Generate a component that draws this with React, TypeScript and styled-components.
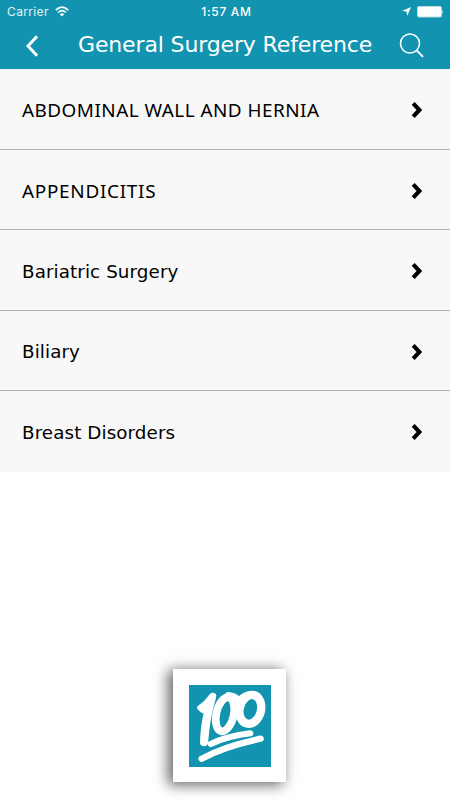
import React from "react";
import styled, { createGlobalStyle } from "styled-components";

const Global = createGlobalStyle`
  * { box-sizing: border-box; }
  body { margin: 0; background: #fff; }
`;

const Screen = styled.div`
  width: 450px;
  height: 800px;
  display: flex;
  flex-direction: column;
  overflow: hidden;
  background: #fff;
  color: #000;
  font-family: "DejaVu Sans", Verdana, sans-serif;
`;

const Header = styled.header`
  height: 69.4px;
  flex: none;
  background: #1294b0;
  color: #fff;
`;

const StatusBar = styled.div`
  height: 23px;
  display: grid;
  grid-template-columns: 1fr auto 1fr;
  align-items: center;
  padding: 0 6px 0 7px;
  font: 400 12px/23px Inter, sans-serif;
`;

const StatusGroup = styled.div<{ $end?: boolean }>`
  display: flex;
  align-items: center;
  justify-content: ${(p) => (p.$end ? "flex-end" : "flex-start")};
  gap: 6px;
`;

const Carrier = styled.span`
  letter-spacing: 0.36px;
  opacity: 0.9;
`;

const Clock = styled.span`
  font-weight: 500;
  letter-spacing: 0.7px;
  padding-left: 2px;
`;

const NavBar = styled.div`
  height: 45px;
  display: grid;
  grid-template-columns: 78px minmax(0, 1fr) 78px;
  align-items: center;
`;

const IconButton = styled.button<{ $inset: number }>`
  border: 0;
  background: none;
  color: inherit;
  padding: 0 0 0 ${(p) => p.$inset}px;
  display: flex;
`;

const Title = styled.h1`
  margin: 0;
  padding-bottom: 2px;
  font-size: 22px;
  font-weight: 400;
  line-height: 43px;
  letter-spacing: -0.14px;
  white-space: nowrap;
`;

const List = styled.ul`
  list-style: none;
  margin: 0;
  padding: 0;
  background: #f8f8f8;
`;

const Row = styled.li`
  height: 80.5px;
  display: flex;
  align-items: center;
  justify-content: space-between;
  padding: 2px 27px 0 22px;
  border-bottom: 1px solid #b2b2b2;
  &:last-child { border-bottom-color: transparent; }
`;

const Label = styled.span<{ $caps?: boolean; $spacing?: number }>`
  font-family: ${(p) => (p.$caps ? '"Noto Sans"' : '"DejaVu Sans"')}, Verdana, sans-serif;
  font-size: ${(p) => (p.$caps ? 18.9 : 18.3)}px;
  letter-spacing: ${(p) => p.$spacing ?? 0.1}px;
  padding-top: ${(p) => (p.$caps ? 0 : 1)}px;
  line-height: 24px;
  white-space: nowrap;
`;

const Footer = styled.footer`
  flex: 1;
  display: flex;
  align-items: flex-end;
  justify-content: center;
  padding: 0 0 18px 9px;
`;

const LogoCard = styled.div`
  width: 113px;
  height: 113px;
  display: grid;
  place-items: center;
  background: #fff;
  box-shadow: -4px 2px 13px 1px rgba(0, 0, 0, 0.6);
`;

const topics = [
  { name: "ABDOMINAL WALL AND HERNIA", caps: true, spacing: 0.48 },
  { name: "APPENDICITIS", caps: true, spacing: 0.72 },
  { name: "Bariatric Surgery" },
  { name: "Biliary" },
  { name: "Breast Disorders" },
];

const Wifi = () => (
  <svg width="14" height="11" viewBox="0 0 14 11" fill="none" stroke="#fff" strokeWidth="1.6">
    <path d="M.8 4.1Q7-1.9 13.2 4.1M3.1 6.5Q7 2.8 10.9 6.5" />
    <path d="M4.8 8.2Q7 6.2 9.2 8.2L7 10.4Z" fill="#fff" stroke="none" />
  </svg>
);

const Location = () => (
  <svg width="9" height="9" viewBox="0 0 9 9" fill="#fff">
    <path d="M9 0 5.2 9 4.5 4.6 0 4.1Z" />
  </svg>
);

const Battery = () => (
  <svg width="27" height="12" viewBox="0 0 27 12">
    <rect x=".5" y=".5" width="24" height="10.5" rx="1.5" fill="#fff" stroke="#b5dce5" />
    <path d="M25.5 4Q27 5.8 25.5 7.7Z" fill="#fff" />
  </svg>
);

const Back = () => (
  <svg width="12" height="22" viewBox="0 0 12 22" fill="none" stroke="#fff" strokeWidth="3">
    <path d="M11 1.3 2 11 11 20.7" />
  </svg>
);

const Search = () => (
  <svg width="26" height="26" viewBox="0 0 26 26" fill="none" stroke="#fff" strokeWidth="1.6">
    <circle cx="11" cy="10.5" r="9.5" />
    <path d="m17.7 17.4 6.3 6.5" strokeWidth="2" />
  </svg>
);

const Chevron = () => (
  <svg width="12" height="18" viewBox="0 0 12 18" fill="none" stroke="#000" strokeWidth="4.1">
    <path d="m2.2 2.4 6.2 6.6-6.2 6.6" />
  </svg>
);

const HundredLogo = () => (
  <svg width="82" height="82" viewBox="0 0 246 246" fill="none" stroke="#fff" strokeLinecap="round" strokeLinejoin="round">
    <path d="M0 0H246V246H0Z" fill="#1294b0" stroke="none" />
    <path d="M31 68Q52 55 65 35Q70 28 75 32Q73 44 66 68Q57 100 50 174Q45 180 40 174Q41 122 53 77Q44 83 32 69Z" fill="#fff" strokeWidth="14" />
    <ellipse cx="108" cy="88" rx="26" ry="52" transform="rotate(13 108 88)" strokeWidth="23" />
    <ellipse cx="184" cy="73" rx="32" ry="44" transform="rotate(14 184 73)" strokeWidth="25" />
    <path d="M118 31Q136 34 144 41M153 46Q160 34 178 29" strokeWidth="20" />
    <path d="M65 177Q112 154 184 145" strokeWidth="18" />
    <path d="M38 221Q106 184 215 161" strokeWidth="19" />
  </svg>
);

export default function App() {
  return (
    <Screen>
      <Global />
      <Header>
        <StatusBar>
          <StatusGroup><Carrier>Carrier</Carrier><Wifi /></StatusGroup>
          <Clock>1:57 AM</Clock>
          <StatusGroup $end><Location /><Battery /></StatusGroup>
        </StatusBar>
        <NavBar>
          <IconButton $inset={26} aria-label="Back"><Back /></IconButton>
          <Title>General Surgery Reference</Title>
          <IconButton $inset={27} aria-label="Search"><Search /></IconButton>
        </NavBar>
      </Header>
      <List>
        {topics.map((t) => (
          <Row key={t.name}>
            <Label $caps={t.caps} $spacing={t.spacing}>{t.name}</Label>
            <Chevron />
          </Row>
        ))}
      </List>
      <Footer><LogoCard><HundredLogo /></LogoCard></Footer>
    </Screen>
  );
}
